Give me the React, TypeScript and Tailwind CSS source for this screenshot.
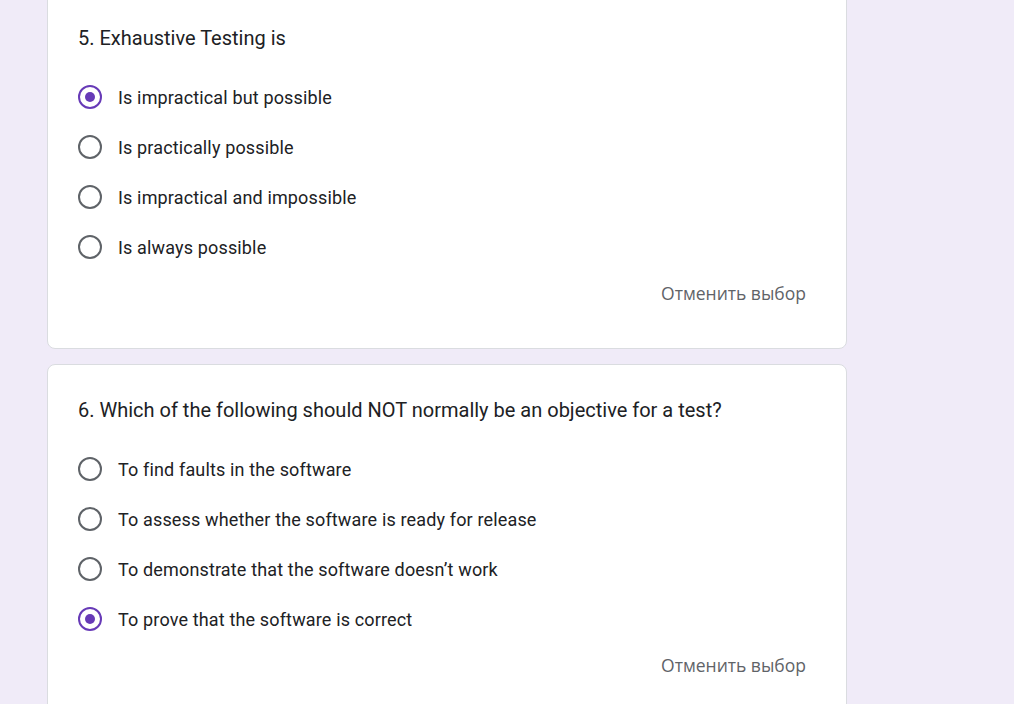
import React from "react";

type Question = {
  title: string;
  options: string[];
  selected: number;
};

const questions: Question[] = [
  {
    title: "5. Exhaustive Testing is",
    options: [
      "Is impractical but possible",
      "Is practically possible",
      "Is impractical and impossible",
      "Is always possible",
    ],
    selected: 0,
  },
  {
    title: "6. Which of the following should NOT normally be an objective for a test?",
    options: [
      "To find faults in the software",
      "To assess whether the software is ready for release",
      "To demonstrate that the software doesn\u2019t work",
      "To prove that the software is correct",
    ],
    selected: 3,
  },
];

function Radio({ checked }: { checked: boolean }) {
  return (
    <span
      className={`flex w-[24px] h-[24px] shrink-0 items-center justify-center rounded-full border-2 ${
        checked ? "border-[#673ab7]" : "border-[#5f6368]"
      }`}
    >
      {checked && <span className="w-[10px] h-[10px] rounded-full bg-[#673ab7]" />}
    </span>
  );
}

function QuestionCard({ q }: { q: Question }) {
  return (
    <div className="w-[800px] bg-white border border-[#dadce0] rounded-lg pl-[30px] pr-[40px] pt-[33px] pb-[37px]">
      <div className="text-[20px] leading-[24px] text-[#202124]">{q.title}</div>
      <div className="mt-[22px]">
        {q.options.map((opt, i) => (
          <div key={opt} className="flex items-center h-[50px] gap-[16px]">
            <Radio checked={i === q.selected} />
            <span className="text-[18px] tracking-[0.15px] text-[#202124]">{opt}</span>
          </div>
        ))}
      </div>
      <div className="flex justify-end mt-[3px]">
        <span className="h-[36px] flex items-center text-[17.5px] font-medium text-[#5f6368] font-['Open_Sans',sans-serif]">
          Отменить выбор
        </span>
      </div>
    </div>
  );
}

export default function App() {
  return (
    <div
      className="min-h-[704px] bg-[#f0ebf8] overflow-hidden"
      style={{ fontFamily: "Roboto, 'Noto Sans', sans-serif" }}
    >
      <div className="pl-[47px] -mt-[8px] flex flex-col gap-[15px]">
        {questions.map((q) => (
          <QuestionCard key={q.title} q={q} />
        ))}
      </div>
    </div>
  );
}
